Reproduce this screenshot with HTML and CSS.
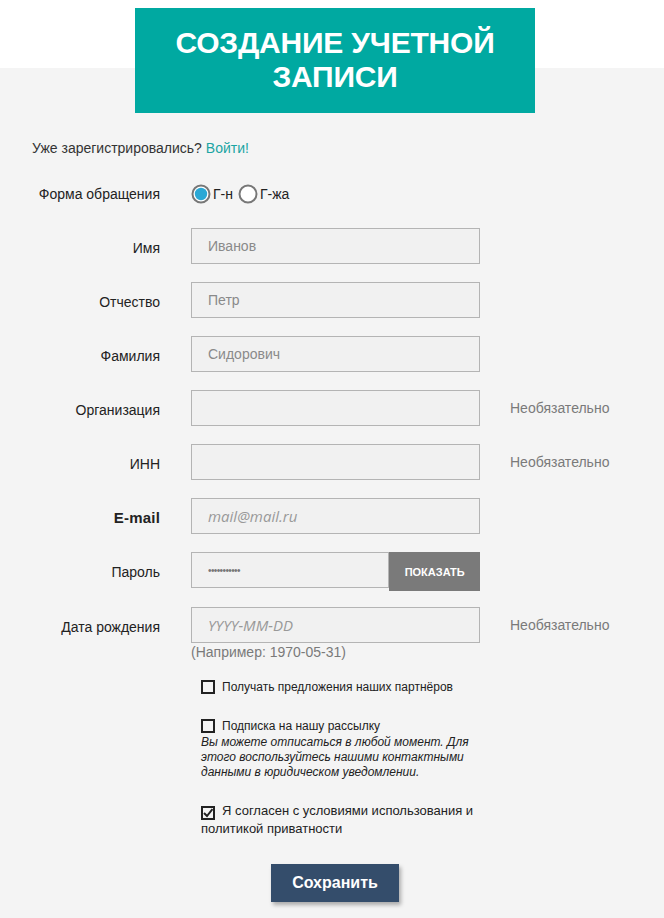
FILE: index.html
```html
<!DOCTYPE html>
<html lang="ru">
<head>
<meta charset="utf-8">
<title>Создание учетной записи</title>
<link rel="stylesheet" href="styles.css">
</head>
<body>
<header class="top">
  <h1 class="title">СОЗДАНИЕ УЧЕТНОЙ<br>ЗАПИСИ</h1>
</header>
<main class="page">
  <p class="login">Уже зарегистрировались? <a class="login-link" href="#">Войти!</a></p>
  <form class="form">
    <div class="row row-radio">
      <span class="label">Форма обращения</span>
      <div class="radios">
        <label class="radio">
          <svg class="radio-icon" width="20" height="20" viewBox="0 0 20 20"><circle cx="10" cy="10" r="8.5" fill="#fff" stroke="#777" stroke-width="2"/><circle cx="10" cy="10" r="6.2" fill="#2ba8d5"/></svg>
          <span>Г-н</span>
        </label>
        <label class="radio">
          <svg class="radio-icon" width="20" height="20" viewBox="0 0 20 20"><circle cx="10" cy="10" r="8.5" fill="#fff" stroke="#777" stroke-width="2"/></svg>
          <span>Г-жа</span>
        </label>
      </div>
    </div>
    <div class="row">
      <span class="label">Имя</span>
      <input class="field" type="text" placeholder="Иванов">
    </div>
    <div class="row">
      <span class="label">Отчество</span>
      <input class="field" type="text" placeholder="Петр">
    </div>
    <div class="row">
      <span class="label">Фамилия</span>
      <input class="field" type="text" placeholder="Сидорович">
    </div>
    <div class="row">
      <span class="label">Организация</span>
      <input class="field" type="text">
      <span class="note">Необязательно</span>
    </div>
    <div class="row">
      <span class="label">ИНН</span>
      <input class="field" type="text">
      <span class="note">Необязательно</span>
    </div>
    <div class="row">
      <span class="label label-bold">E-mail</span>
      <input class="field field-italic" type="text" placeholder="mail@mail.ru">
    </div>
    <div class="row">
      <span class="label">Пароль</span>
      <div class="pass">
        <input class="field field-pass" type="password" value="12345678901">
        <button class="show" type="button">ПОКАЗАТЬ</button>
      </div>
    </div>
    <div class="row row-date">
      <span class="label">Дата рождения</span>
      <div class="date">
        <input class="field field-italic" type="text" placeholder="YYYY-MM-DD">
        <span class="hint">(Например: 1970-05-31)</span>
      </div>
      <span class="note">Необязательно</span>
    </div>
    <div class="checks">
      <label class="check check-1"><span class="box"></span>Получать предложения наших партнёров</label>
      <label class="check check-2"><span class="box"></span>Подписка на нашу рассылку</label>
      <p class="info">Вы можете отписаться в любой момент. Для этого воспользуйтесь нашими контактными данными в юридическом уведомлении.</p>
      <label class="check check-3"><span class="box box-on"><svg width="10" height="10" viewBox="0 0 10 10"><path d="M1 5 L4 8 L9.5 1" fill="none" stroke="#222" stroke-width="2"/></svg></span>Я согласен с условиями использования и политикой приватности</label>
    </div>
    <div class="actions">
      <button class="save" type="button">Сохранить</button>
    </div>
  </form>
</main>
</body>
</html>
```

FILE: styles.css
```css
* { box-sizing: border-box; }

html, body {
  margin: 0;
  padding: 0;
}

body {
  background: #f4f4f4;
  font-family: "Liberation Sans", Arial, sans-serif;
  color: #333;
  font-size: 14px;
  width: 664px;
  height: 918px;
  overflow: hidden;
}

.top {
  background: linear-gradient(#ffffff 0, #ffffff 68px, #f4f4f4 68px);
  padding: 8px 0 0 6px;
  display: flex;
  justify-content: center;
}

.title {
  margin: 0;
  width: 400px;
  height: 105px;
  padding: 18px 0 0 0;
  background: #00a9a1;
  color: #fff;
  font-family: "Liberation Sans", Arial, sans-serif;
  font-weight: 700;
  font-size: 30px;
  line-height: 34px;
  text-align: center;
  letter-spacing: -0.2px;
}

.page {
  padding: 0;
}

.login {
  margin: 25px 0 0 32px;
  line-height: 20px;
  font-size: 14px;
  color: #333;
}

.login-link {
  color: #1ba5a3;
  text-decoration: none;
}

.form {
  display: flex;
  flex-direction: column;
}

.row {
  display: grid;
  grid-template-columns: 160px 289px auto;
  column-gap: 31px;
  align-items: start;
  margin-top: 18px;
}

.row-radio {
  margin-top: 24px;
  height: 22px;
  align-items: center;
}

.row-radio + .row {
  margin-top: 24px;
}

.row-date {
  margin-top: 19px;
}

.label {
  text-align: right;
  line-height: 20px;
  padding-top: 10px;
  color: #222;
  font-size: 14px;
}

.row-radio .label {
  padding-top: 1px;
  line-height: 22px;
}

.label-bold {
  font-weight: 700;
  font-size: 15px;
  letter-spacing: 0.2px;
}

.radios {
  display: flex;
  align-items: center;
  gap: 5px;
}

.radio {
  display: flex;
  align-items: center;
  gap: 2px;
  font-size: 14px;
  color: #222;
}

.radio-icon {
  display: block;
}

.field {
  display: block;
  width: 289px;
  height: 36px;
  border: 1px solid #b4b4b4;
  background: #f1f1f1;
  padding: 0 0 0 16px;
  margin: 0;
  font-family: "Liberation Sans", Arial, sans-serif;
  font-size: 14px;
  color: #555;
  outline: none;
  border-radius: 0;
}

.field::placeholder {
  color: #8a8a8a;
  opacity: 1;
}

.field-italic {
  font-family: "Open Sans", "Liberation Sans", sans-serif;
  font-style: italic;
  font-size: 15px;
}

.field-italic::placeholder {
  color: #999;
  font-style: italic;
}

.note {
  color: #7a7a7a;
  font-size: 14px;
  line-height: 20px;
  padding-top: 8px;
  margin-left: -1px;
}

.pass {
  display: flex;
  align-items: flex-start;
  height: 36px;
}

.field-pass {
  width: 199px;
  font-size: 10px;
  color: #777;
  letter-spacing: -0.6px;
}

.show {
  width: 91px;
  height: 39px;
  border: 0;
  margin: 0;
  padding: 0;
  background: #7a7a7a;
  color: #fff;
  font-family: "Liberation Sans", Arial, sans-serif;
  font-weight: 700;
  font-size: 11px;
  border-radius: 0;
}

.date {
  display: flex;
  flex-direction: column;
}

.hint {
  line-height: 18px;
  color: #7a7a7a;
  font-size: 14px;
}

.checks {
  margin: 18px 0 0 201px;
  width: 280px;
  display: flex;
  flex-direction: column;
}

.check {
  display: block;
  color: #222;
}

.check-1 {
  font-size: 12px;
  line-height: 16px;
}

.check-2 {
  margin-top: 23px;
  font-size: 12px;
  line-height: 16px;
}

.check-3 {
  margin-top: 22px;
  font-size: 13px;
  line-height: 17px;
}

.box {
  display: inline-flex;
  align-items: center;
  justify-content: center;
  width: 14px;
  height: 14px;
  border: 2px solid #222;
  margin-right: 7px;
  vertical-align: -3px;
  background: transparent;
}

.box svg {
  display: block;
}

.info {
  margin: 1px 0 0 0;
  font-style: italic;
  font-size: 12px;
  line-height: 15px;
  color: #222;
  width: 272px;
}

.actions {
  margin: 27px 0 0 271px;
}

.save {
  width: 128px;
  height: 38px;
  border: 0;
  padding: 0;
  background: #344d6b;
  color: #fff;
  font-family: "Liberation Sans", Arial, sans-serif;
  font-weight: 700;
  font-size: 16px;
  box-shadow: 2px 3px 4px rgba(0, 0, 0, 0.3);
  border-radius: 0;
}
```
